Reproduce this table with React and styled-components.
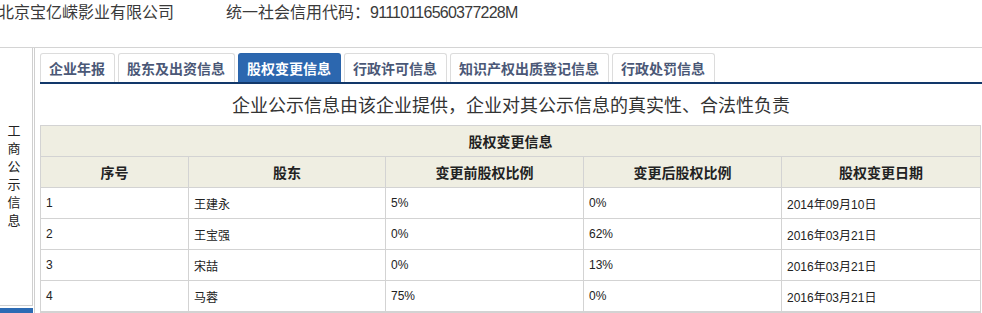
import React from "react";
import styled, { createGlobalStyle } from "styled-components";

const Global = createGlobalStyle`
  html, body {
    margin: 0;
    padding: 0;
    background: #fff;
    overflow: hidden;
    font-family: "Noto Sans CJK SC", "Liberation Sans", sans-serif;
    color: #333;
  }
`;

const Page = styled.div`
  width: 982px;
`;

const TopBar = styled.div`
  display: flex;
  height: 47px;
  border-bottom: 1px solid #d4d4d4;
  font-size: 16px;
  line-height: 22px;
  color: #3a3a3a;
  white-space: nowrap;
`;

const CompanyName = styled.span`
  margin-left: -2px;
  width: 228px;
  flex: none;
`;

const CreditCode = styled.span`
  letter-spacing: 0;
`;

const CodeNumber = styled.span`
  font-family: "Liberation Sans", sans-serif;
  letter-spacing: -0.75px;
`;

const Body = styled.div`
  display: flex;
  align-items: stretch;
`;

const Sidebar = styled.div`
  width: 33px;
  flex: none;
  display: flex;
  flex-direction: column;
  gap: 2px;
`;

const SideItem = styled.div`
  height: 257px;
  border-right: 1px solid #cfcfcf;
  border-bottom: 1px solid #cfcfcf;
  display: flex;
  align-items: center;
  justify-content: center;
`;

const VerticalLabel = styled.span`
  width: 13px;
  font-size: 13px;
  line-height: 18px;
  color: #222;
  word-break: break-all;
  text-align: center;
  margin: 0 0 4px -4px;
`;

const SideItemActive = styled.div`
  height: 10px;
  background: #2c6bb4;
  width: 33px;
`;

const Content = styled.div`
  flex: 1;
  margin-left: 1px;
  border-left: 1px solid #cfcfcf;
  padding: 5px 0 0 5px;
  min-width: 0;
`;

const TabBar = styled.div`
  display: flex;
  gap: 3px;
  border-bottom: 2px solid #12386a;
`;

const Tab = styled.div`
  height: 28px;
  padding: 0 9px 0 8px;
  border: 1px solid ${(p) => (p.$active ? "#2a64ab" : "#dcdcdc")};
  border-bottom: none;
  border-radius: 3px 3px 0 0;
  background: ${(p) => (p.$active ? "#2c67af" : "#fff")};
  color: ${(p) => (p.$active ? "#fff" : "#4b5877")};
  font-size: 14px;
  font-weight: bold;
  line-height: 29px;
  white-space: nowrap;
`;

const Notice = styled.div`
  height: 41px;
  line-height: 41px;
  text-align: center;
  font-size: 18px;
  color: #333;
  white-space: nowrap;
`;

const Table = styled.table`
  border-collapse: collapse;
  width: 941px;
  table-layout: fixed;
`;

const TitleCell = styled.th`
  height: 30px;
  background: #efeee2;
  border: 1px solid #d3d3d3;
  font-size: 14px;
  font-weight: bold;
  color: #222;
  text-align: center;
  padding: 0;
`;

const HeadCell = styled.th`
  height: 30px;
  background: #efeee2;
  border: 1px solid #d3d3d3;
  font-size: 14px;
  font-weight: bold;
  color: #222;
  text-align: center;
  padding: 0;
`;

const Cell = styled.td`
  height: 30px;
  border: 1px solid #d3d3d3;
  font-size: 12px;
  color: #222;
  padding: 0 0 0 5px;
  font-family: "Liberation Sans", "Noto Sans CJK SC", sans-serif;
`;

const NextSection = styled.div`
  height: 8px;
  background: #efeee2;
  width: 941px;
  border-top: 1px solid #d3d3d3;
`;

const tabs = [
  "企业年报",
  "股东及出资信息",
  "股权变更信息",
  "行政许可信息",
  "知识产权出质登记信息",
  "行政处罚信息",
];

const rows = [
  { no: "1", holder: "王建永", before: "5%", after: "0%", date: "2014年09月10日" },
  { no: "2", holder: "王宝强", before: "0%", after: "62%", date: "2016年03月21日" },
  { no: "3", holder: "宋喆", before: "0%", after: "13%", date: "2016年03月21日" },
  { no: "4", holder: "马蓉", before: "75%", after: "0%", date: "2016年03月21日" },
];

export default function App() {
  return (
    <Page>
      <Global />
      <TopBar>
        <CompanyName>北京宝亿嵘影业有限公司</CompanyName>
        <CreditCode>
          统一社会信用代码：<CodeNumber>91110116560377228M</CodeNumber>
        </CreditCode>
      </TopBar>
      <Body>
        <Sidebar>
          <SideItem>
            <VerticalLabel>工商公示信息</VerticalLabel>
          </SideItem>
          <SideItemActive />
        </Sidebar>
        <Content>
          <TabBar>
            {tabs.map((t) => (
              <Tab key={t} $active={t === "股权变更信息"}>
                {t}
              </Tab>
            ))}
          </TabBar>
          <Notice>企业公示信息由该企业提供，企业对其公示信息的真实性、合法性负责</Notice>
          <Table>
            <colgroup>
              <col style={{ width: 148 }} />
              <col style={{ width: 197 }} />
              <col style={{ width: 198 }} />
              <col style={{ width: 198 }} />
              <col />
            </colgroup>
            <thead>
              <tr>
                <TitleCell colSpan={5}>股权变更信息</TitleCell>
              </tr>
              <tr>
                <HeadCell>序号</HeadCell>
                <HeadCell>股东</HeadCell>
                <HeadCell>变更前股权比例</HeadCell>
                <HeadCell>变更后股权比例</HeadCell>
                <HeadCell>股权变更日期</HeadCell>
              </tr>
            </thead>
            <tbody>
              {rows.map((r) => (
                <tr key={r.no}>
                  <Cell>{r.no}</Cell>
                  <Cell>{r.holder}</Cell>
                  <Cell>{r.before}</Cell>
                  <Cell>{r.after}</Cell>
                  <Cell>{r.date}</Cell>
                </tr>
              ))}
            </tbody>
          </Table>
          <NextSection />
        </Content>
      </Body>
    </Page>
  );
}
